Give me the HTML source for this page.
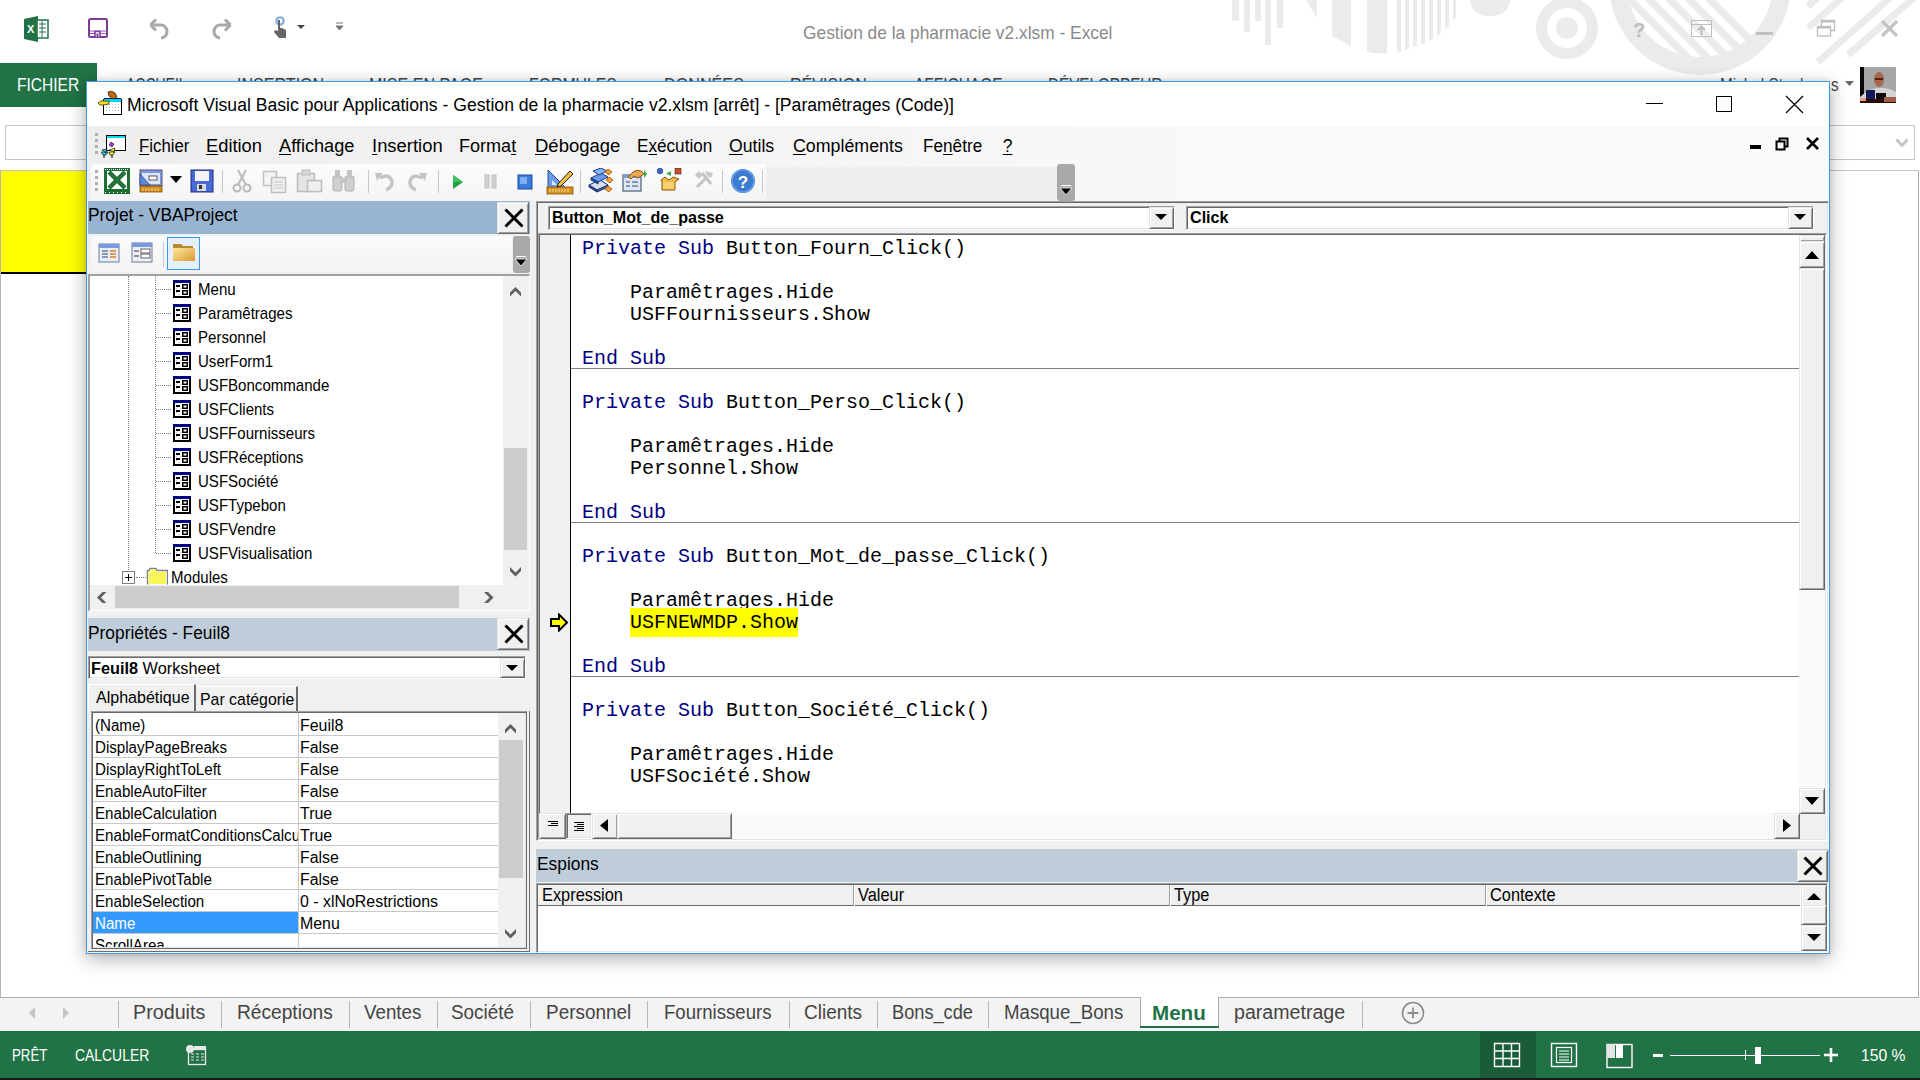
<!DOCTYPE html>
<html><head><meta charset="utf-8">
<style>
*{margin:0;padding:0;box-sizing:border-box}
html,body{width:1920px;height:1080px;overflow:hidden;background:#fff;font-family:"Liberation Sans",sans-serif;position:relative}
.a{position:absolute}
.t{position:absolute;white-space:pre;line-height:1}
u{text-decoration:underline;text-underline-offset:2px;text-decoration-thickness:1px}
</style></head><body>

<svg class="a" style="left:0px;top:0px;" width="1920" height="76" viewBox="0 0 1920 76"><g fill="#ebebeb">
<rect x="1232" y="-2" width="7" height="23"/>
<rect x="1244" y="-2" width="6" height="34"/>
<rect x="1255" y="-2" width="6" height="23"/>
<rect x="1265" y="-2" width="6" height="47"/>
<rect x="1277" y="-2" width="6" height="30"/>
<polygon points="1306,0 1317,0 1317,18"/>
<polygon points="1332,0 1351,0 1351,46 1332,36"/>
<path d="M1367,0 H1387 V53 Q1377,54 1367,52 Z"/>
<path d="M1397,0 H1401 V51 L1397,52 Z M1405,0 H1409 V49 L1405,50 Z M1413,0 H1417 V46 L1413,47 Z M1421,0 H1425 V43 L1421,45 Z M1429,0 H1433 V39 L1429,41 Z M1437,0 H1441 V33 L1437,36 Z M1445,0 H1449 V26 L1445,30 Z M1453,0 H1456 V17 L1453,21 Z"/>
<path d="M1470,0 H1510 Q1508,16 1490,16 Q1472,16 1470,0 Z"/>
<path fill-rule="evenodd" d="M1567,-2 m-31,30 a31,31 0 1,0 62,0 a31,31 0 1,0 -62,0 Z M1547,28 a20,20 0 1,0 40,0 a20,20 0 1,0 -40,0 Z"/>
<circle cx="1567" cy="28" r="11"/>
<path fill-rule="evenodd" d="M1609,-16 a91,91 0 1,0 182,0 a91,91 0 1,0 -182,0 Z M1627,-16 a73,73 0 1,0 146,0 a73,73 0 1,0 -146,0 Z"/>
<g clip-path="url(#cl1)" stroke="#ebebeb" stroke-width="7.5"><path d="M1620,-10 L1700,70 M1636,-14 L1720,70 M1652,-18 L1740,70 M1668,-22 L1760,70 M1684,-26 L1780,70"/></g>
</g>
<g stroke="#ebebeb" stroke-width="7" fill="none"><path d="M1808,6 L1824,-8 M1808,28 L1846,-6 M1818,62 L1892,-4 M1848,55 L1916,-4"/></g>
<defs><clipPath id="cl1"><circle cx="1700" cy="-16" r="74"/></clipPath></defs></svg>
<svg class="a" style="left:24px;top:16px;" width="26" height="26" viewBox="0 0 26 26"><path d="M0,3 L14,0 V26 L0,23 Z" fill="#217346"/>
<rect x="13" y="4" width="11" height="18" fill="#fff" stroke="#217346" stroke-width="1.5"/>
<path d="M15,8h7M15,12h7M15,16h7M18,5v16" stroke="#217346" stroke-width="1"/>
<text x="3" y="17" font-size="11" font-weight="bold" fill="#fff" font-family="Liberation Sans">X</text></svg>
<svg class="a" style="left:88px;top:18px;" width="20" height="20" viewBox="0 0 20 20"><rect x="1" y="1" width="18" height="18" rx="1.5" fill="#fff" stroke="#7d3c98" stroke-width="2"/>
<path d="M2,13 H18 M2,15.5 H7 M12,15.5 H18" stroke="#9a5ab8" stroke-width="1.2"/><path d="M7,19 V13.5 H12 V19" fill="#fff" stroke="#7d3c98" stroke-width="1.6"/><path d="M8.5,19 V15.5 H10.5 V19 Z" fill="#7d3c98"/></svg>
<svg class="a" style="left:148px;top:17px;" width="24" height="23" viewBox="0 0 24 23"><path d="M4,8 H13 A6,6.5 0 0 1 13,21" fill="none" stroke="#a8a8a8" stroke-width="3"/><path d="M2.5,8 L8,2.5 M2.5,8 L8,13.5" stroke="#a8a8a8" stroke-width="3" fill="none"/></svg>
<svg class="a" style="left:209px;top:17px;" width="24" height="23" viewBox="0 0 24 23"><path d="M20,8 H11 A6,6.5 0 0 0 11,21" fill="none" stroke="#a8a8a8" stroke-width="3"/><path d="M21.5,8 L16,2.5 M21.5,8 L16,13.5" stroke="#a8a8a8" stroke-width="3" fill="none"/></svg>
<svg class="a" style="left:271px;top:16px;" width="20" height="24" viewBox="0 0 20 24"><circle cx="9" cy="5" r="3.6" fill="none" stroke="#8ab0e0" stroke-width="2.4"/><path d="M7,4 V15 L4,14 L3,16 L8,22 H15 V14 L11,12 H9 V4 Z" fill="#666"/></svg>
<svg class="a" style="left:296px;top:24px;" width="10" height="6" viewBox="0 0 10 6"><path d="M1,1 H9 L5,5 Z" fill="#444"/></svg>
<svg class="a" style="left:335px;top:22px;" width="10" height="9" viewBox="0 0 10 9"><path d="M1,1 H8 M1,4 H8 L4.5,8 Z" stroke="#777" stroke-width="1" fill="#777"/></svg>
<div class="t" style="left:803px;top:22.85px;font-size:19px;color:#8a8a8a;font-weight:normal;font-family:'Liberation Sans',sans-serif;transform:scaleX(0.913);transform-origin:0 0;">Gestion de la pharmacie v2.xlsm - Excel</div>
<div class="t" style="left:1633px;top:19.50px;font-size:20px;color:#bcbcbc;font-weight:bold;font-family:'Liberation Sans',sans-serif;">?</div>
<svg class="a" style="left:1690px;top:18px;" width="24" height="22" viewBox="0 0 24 22"><rect x="1.5" y="2.5" width="20" height="16" fill="none" stroke="#bdbdbd" stroke-width="1"/><path d="M1.5,6.5 H21.5" stroke="#bdbdbd"/><path d="M11.5,17 V9 M8,12 L11.5,8.5 L15,12" stroke="#bdbdbd" stroke-width="2" fill="none"/></svg>
<div class="a" style="left:1756px;top:32px;width:17px;height:3px;background:#c0c0c0;"></div>
<svg class="a" style="left:1816px;top:18px;" width="22" height="22" viewBox="0 0 22 22"><path d="M5.5,8 V2.5 H18.5 V12.5 H15" fill="none" stroke="#bdbdbd" stroke-width="1.3"/><rect x="5" y="2" width="14" height="2.5" fill="#bdbdbd"/><rect x="1.5" y="8.5" width="13" height="9.5" fill="#fff" stroke="#bdbdbd" stroke-width="1.3"/><rect x="1" y="8" width="14" height="2.5" fill="#bdbdbd"/></svg>
<svg class="a" style="left:1879px;top:18px;" width="22" height="22" viewBox="0 0 22 22"><path d="M3,3 L18,18 M18,3 L3,18" stroke="#c4c4c4" stroke-width="3.2"/></svg>
<div class="a" style="left:0px;top:63px;width:97px;height:44px;background:#217346;"></div>
<div class="t" style="left:17px;top:76.40px;font-size:18px;color:#fff;font-weight:normal;font-family:'Liberation Sans',sans-serif;transform:scaleX(0.863);transform-origin:0 0;">FICHIER</div>
<div class="t" style="left:125.8px;top:76.20px;font-size:18px;color:#444;font-weight:normal;font-family:'Liberation Sans',sans-serif;transform:scaleX(0.776);transform-origin:0 0;">ACCUEIL</div>
<div class="t" style="left:237.3px;top:76.20px;font-size:18px;color:#444;font-weight:normal;font-family:'Liberation Sans',sans-serif;transform:scaleX(0.893);transform-origin:0 0;">INSERTION</div>
<div class="t" style="left:368.6px;top:76.20px;font-size:18px;color:#444;font-weight:normal;font-family:'Liberation Sans',sans-serif;transform:scaleX(0.892);transform-origin:0 0;">MISE EN PAGE</div>
<div class="t" style="left:528.8px;top:76.20px;font-size:18px;color:#444;font-weight:normal;font-family:'Liberation Sans',sans-serif;transform:scaleX(0.879);transform-origin:0 0;">FORMULES</div>
<div class="t" style="left:663.8px;top:76.20px;font-size:18px;color:#444;font-weight:normal;font-family:'Liberation Sans',sans-serif;transform:scaleX(0.898);transform-origin:0 0;">DONNÉES</div>
<div class="t" style="left:789.8px;top:76.20px;font-size:18px;color:#444;font-weight:normal;font-family:'Liberation Sans',sans-serif;transform:scaleX(0.893);transform-origin:0 0;">RÉVISION</div>
<div class="t" style="left:913.8px;top:76.20px;font-size:18px;color:#444;font-weight:normal;font-family:'Liberation Sans',sans-serif;transform:scaleX(0.859);transform-origin:0 0;">AFFICHAGE</div>
<div class="t" style="left:1048.3999999999999px;top:76.20px;font-size:18px;color:#444;font-weight:normal;font-family:'Liberation Sans',sans-serif;transform:scaleX(0.847);transform-origin:0 0;">DÉVELOPPEUR</div>
<div class="t" style="left:1720px;top:75.70px;font-size:18px;color:#444;font-weight:normal;font-family:'Liberation Sans',sans-serif;transform:scaleX(0.85);transform-origin:0 0;">Michel Stoubes</div>
<div class="t" style="left:1831px;top:75.70px;font-size:18px;color:#444;font-weight:normal;font-family:'Liberation Sans',sans-serif;transform:scaleX(0.85);transform-origin:0 0;">s</div>
<svg class="a" style="left:1845px;top:81px;" width="9" height="6" viewBox="0 0 9 6"><path d="M0,0 H9 L4.5,5 Z" fill="#666"/></svg>
<svg class="a" style="left:1860px;top:67px;" width="36" height="36" viewBox="0 0 36 36"><rect width="36" height="36" fill="#a6a6a6"/><rect width="4" height="31" fill="#080808"/>
<ellipse cx="19" cy="12.5" rx="5" ry="7.5" fill="#a8664f"/><rect x="15" y="11" width="8" height="2" fill="#502010"/>
<path d="M0,30 Q8,22 17,21 Q27,20 36,25 V33 H0 Z" fill="#d4d4d4"/>
<rect x="6" y="23" width="9" height="13" fill="#101a58"/><rect x="16" y="26" width="10" height="7" fill="#0a0a0a"/>
<rect x="0" y="32" width="36" height="4" fill="#2a0c0c"/><rect x="24" y="30" width="12" height="5" fill="#a06048"/><rect x="0" y="31" width="6" height="3" fill="#e0a080"/></svg>
<div class="a" style="left:5px;top:125px;width:1910px;height:35px;background:#fff;border:1px solid #c6c6c6"></div>
<svg class="a" style="left:1895px;top:138px;" width="14" height="10" viewBox="0 0 14 10"><path d="M1.5,1.5 L7,7.5 L12.5,1.5" stroke="#c4c4c4" stroke-width="2.8" fill="none"/></svg>
<div class="a" style="left:0px;top:170px;width:1919px;height:828px;background:#fff;border-top:1px solid #c6c6c6;border-left:1px solid #b5b5b5;border-bottom:1px solid #ababab;border-right:1px solid #ababab"></div>
<div class="a" style="left:1px;top:171px;width:85px;height:101px;background:#ffff00;"></div>
<div class="a" style="left:1px;top:272px;width:85px;height:2px;background:#000;"></div>
<div class="a" style="left:0px;top:998px;width:1920px;height:33px;background:#f3f3f3;"></div>
<svg class="a" style="left:26px;top:1005px;" width="12" height="16" viewBox="0 0 12 16"><path d="M9,2 L3,8 L9,14 Z" fill="#c4c4c4"/></svg>
<svg class="a" style="left:60px;top:1005px;" width="12" height="16" viewBox="0 0 12 16"><path d="M3,2 L9,8 L3,14 Z" fill="#c4c4c4"/></svg>
<div class="a" style="left:118px;top:1001px;width:1px;height:27px;background:#b8b8b8;"></div>
<div class="a" style="left:221px;top:1001px;width:1px;height:27px;background:#b8b8b8;"></div>
<div class="a" style="left:349px;top:1001px;width:1px;height:27px;background:#b8b8b8;"></div>
<div class="a" style="left:437px;top:1001px;width:1px;height:27px;background:#b8b8b8;"></div>
<div class="a" style="left:530px;top:1001px;width:1px;height:27px;background:#b8b8b8;"></div>
<div class="a" style="left:647px;top:1001px;width:1px;height:27px;background:#b8b8b8;"></div>
<div class="a" style="left:789px;top:1001px;width:1px;height:27px;background:#b8b8b8;"></div>
<div class="a" style="left:877px;top:1001px;width:1px;height:27px;background:#b8b8b8;"></div>
<div class="a" style="left:988px;top:1001px;width:1px;height:27px;background:#b8b8b8;"></div>
<div class="a" style="left:1362px;top:1001px;width:1px;height:27px;background:#b8b8b8;"></div>
<div class="t" style="left:133.0px;top:1003.34px;font-size:19.6px;color:#444;font-weight:normal;font-family:'Liberation Sans',sans-serif;transform:scaleX(1.006);transform-origin:0 0;">Produits</div>
<div class="t" style="left:237.0px;top:1003.34px;font-size:19.6px;color:#444;font-weight:normal;font-family:'Liberation Sans',sans-serif;transform:scaleX(0.977);transform-origin:0 0;">Réceptions</div>
<div class="t" style="left:363.5px;top:1003.34px;font-size:19.6px;color:#444;font-weight:normal;font-family:'Liberation Sans',sans-serif;transform:scaleX(0.957);transform-origin:0 0;">Ventes</div>
<div class="t" style="left:450.5px;top:1003.34px;font-size:19.6px;color:#444;font-weight:normal;font-family:'Liberation Sans',sans-serif;transform:scaleX(0.962);transform-origin:0 0;">Société</div>
<div class="t" style="left:545.5px;top:1003.34px;font-size:19.6px;color:#444;font-weight:normal;font-family:'Liberation Sans',sans-serif;transform:scaleX(0.967);transform-origin:0 0;">Personnel</div>
<div class="t" style="left:664.2px;top:1003.34px;font-size:19.6px;color:#444;font-weight:normal;font-family:'Liberation Sans',sans-serif;transform:scaleX(0.949);transform-origin:0 0;">Fournisseurs</div>
<div class="t" style="left:803.5px;top:1003.34px;font-size:19.6px;color:#444;font-weight:normal;font-family:'Liberation Sans',sans-serif;transform:scaleX(0.97);transform-origin:0 0;">Clients</div>
<div class="t" style="left:892.1px;top:1003.34px;font-size:19.6px;color:#444;font-weight:normal;font-family:'Liberation Sans',sans-serif;transform:scaleX(0.929);transform-origin:0 0;">Bons_cde</div>
<div class="t" style="left:1004.1px;top:1003.34px;font-size:19.6px;color:#444;font-weight:normal;font-family:'Liberation Sans',sans-serif;transform:scaleX(0.952);transform-origin:0 0;">Masque_Bons</div>
<div class="a" style="left:1140px;top:997px;width:79px;height:31px;background:#fff;border-left:1px solid #ababab;border-right:1px solid #ababab"></div>
<div class="a" style="left:1140px;top:1026px;width:79px;height:2px;background:#217346;"></div>
<div class="t" style="left:1152px;top:1002.50px;font-size:20px;color:#217346;font-weight:bold;font-family:'Liberation Sans',sans-serif;transform:scaleX(1.03);transform-origin:0 0;">Menu</div>
<div class="t" style="left:1234px;top:1003.34px;font-size:19.6px;color:#444;font-weight:normal;font-family:'Liberation Sans',sans-serif;">parametrage</div>
<svg class="a" style="left:1401px;top:1001px;" width="24" height="24" viewBox="0 0 24 24"><circle cx="12" cy="12" r="10.5" fill="none" stroke="#8c8c8c" stroke-width="1.6"/><path d="M12,6.5 V17.5 M6.5,12 H17.5" stroke="#8c8c8c" stroke-width="1.8"/></svg>
<div class="a" style="left:0px;top:1031px;width:1920px;height:47px;background:#217346;"></div>
<div class="a" style="left:0px;top:1078px;width:1920px;height:2px;background:#1a1a1a;"></div>
<div class="t" style="left:12px;top:1046.71px;font-size:17.4px;color:#fff;font-weight:normal;font-family:'Liberation Sans',sans-serif;transform:scaleX(0.765);transform-origin:0 0;">PRÊT</div>
<div class="t" style="left:75px;top:1046.71px;font-size:17.4px;color:#fff;font-weight:normal;font-family:'Liberation Sans',sans-serif;transform:scaleX(0.8);transform-origin:0 0;">CALCULER</div>
<svg class="a" style="left:185px;top:1044px;" width="22" height="22" viewBox="0 0 22 22"><circle cx="5" cy="5" r="4" fill="#e8e8e8"/><rect x="3.5" y="5.5" width="17" height="15" fill="none" stroke="#e8e8e8" stroke-width="1.3"/><rect x="9" y="2" width="12" height="4" fill="#e8e8e8"/><path d="M6,10h3M11,10h3M16,10h3M6,13h3M11,13h3M16,13h3M6,16h3M11,16h3M16,16h3" stroke="#e8e8e8" stroke-width="1.2"/></svg>
<div class="a" style="left:1480px;top:1032px;width:56px;height:46px;background:#1a5c38;"></div>
<svg class="a" style="left:1493px;top:1042px;" width="28" height="26" viewBox="0 0 28 26"><path d="M1.5,1.5 H26.5 V24.5 H1.5 Z M1.5,9 H26.5 M1.5,16.5 H26.5 M10,1.5 V24.5 M18.5,1.5 V24.5" fill="none" stroke="#fff" stroke-width="1.4"/></svg>
<svg class="a" style="left:1550px;top:1042px;" width="28" height="26" viewBox="0 0 28 26"><rect x="1.5" y="1.5" width="25" height="23" fill="none" stroke="#fff" stroke-width="1.4"/><rect x="6.5" y="5.5" width="15" height="15" fill="none" stroke="#fff" stroke-width="1.2"/><path d="M9,9h10M9,12h10M9,15h10M9,18h10" stroke="#fff" stroke-width="1"/></svg>
<svg class="a" style="left:1606px;top:1043px;" width="27" height="26" viewBox="0 0 27 26"><rect x="1" y="1.5" width="25" height="23" fill="none" stroke="#fff" stroke-width="1.4"/><rect x="1" y="1" width="8" height="14" fill="#e4e4e4"/><rect x="10" y="1" width="7" height="14" fill="#fff"/></svg>
<div class="a" style="left:1653px;top:1054px;width:10px;height:3px;background:#fff;"></div>
<div class="a" style="left:1670px;top:1055px;width:150px;height:1px;background:#fff;"></div>
<div class="a" style="left:1745px;top:1050px;width:1px;height:10px;background:#fff;"></div>
<div class="a" style="left:1755px;top:1047px;width:6px;height:17px;background:#fff;"></div>
<svg class="a" style="left:1823px;top:1047px;" width="16" height="16" viewBox="0 0 16 16"><path d="M8,1 V15 M1,8 H15" stroke="#fff" stroke-width="2.6"/></svg>
<div class="t" style="left:1861px;top:1047.21px;font-size:17.4px;color:#fff;font-weight:normal;font-family:'Liberation Sans',sans-serif;transform:scaleX(0.9);transform-origin:0 0;">150 %</div>
<div class="a" style="left:86px;top:81px;width:1744px;height:873px;background:#f0f0f0;border:1px solid #3d9be9;box-shadow:0 5px 18px rgba(0,0,0,.30),0 0 6px rgba(0,0,0,.10)"></div>
<div class="a" style="left:87px;top:82px;width:1742px;height:44px;background:#fff;"></div>
<svg class="a" style="left:97px;top:90px;" width="27" height="26" viewBox="0 0 27 26"><rect x="6.5" y="9.5" width="18" height="15" fill="#fff" stroke="#000"/>
<rect x="7" y="9" width="17" height="3" fill="#00d8f8"/><path d="M7,8.5 H24" stroke="#000060"/>
<g fill="#b0b0b0"><rect x="9" y="14" width="1" height="1"/><rect x="12" y="14" width="1" height="1"/><rect x="15" y="14" width="1" height="1"/><rect x="18" y="14" width="1" height="1"/><rect x="21" y="14" width="1" height="1"/>
<rect x="9" y="17" width="1" height="1"/><rect x="12" y="17" width="1" height="1"/><rect x="15" y="17" width="1" height="1"/><rect x="18" y="17" width="1" height="1"/><rect x="21" y="17" width="1" height="1"/>
<rect x="9" y="20" width="1" height="1"/><rect x="12" y="20" width="1" height="1"/><rect x="15" y="20" width="1" height="1"/><rect x="18" y="20" width="1" height="1"/><rect x="21" y="20" width="1" height="1"/></g>
<path d="M11,2 Q15,0 18,3 L20,7 L16,9 L12,6 Z" fill="#b86a18" stroke="#402000" stroke-width=".8"/>
<path d="M1,13 Q3,10 8,11 L12,11 L12,14 L6,15 Q2,16 1,13 Z" fill="#f0e020" stroke="#403000" stroke-width=".8"/></svg>
<div class="t" style="left:127px;top:96.84px;font-size:17.6px;color:#000;font-weight:normal;font-family:'Liberation Sans',sans-serif;">Microsoft Visual Basic pour Applications - Gestion de la pharmacie v2.xlsm [arrêt] - [Paramêtrages (Code)]</div>
<div class="a" style="left:1646px;top:103px;width:17px;height:1px;background:#000;"></div>
<div class="a" style="left:1716px;top:96px;width:16px;height:16px;background:transparent;border:1px solid #000"></div>
<svg class="a" style="left:1785px;top:95px;" width="19" height="19" viewBox="0 0 19 19"><path d="M1,1 L18,18 M18,1 L1,18" stroke="#000" stroke-width="1.2"/></svg>
<div class="a" style="left:87px;top:126px;width:1742px;height:76px;background:linear-gradient(to right,#eeeeee 0%,#f3f3f3 30%,#f8f8f8 60%,#fafafa 100%);"></div>
<div class="a" style="left:91px;top:164px;width:675px;height:37px;background:linear-gradient(to bottom,#fcfcfc,#f4f4f4);border-radius:4px 0 0 4px"></div>
<div class="a" style="left:95px;top:133px;width:3px;height:3px;background:#b0b0b0;"></div>
<div class="a" style="left:95px;top:139px;width:3px;height:3px;background:#b0b0b0;"></div>
<div class="a" style="left:95px;top:145px;width:3px;height:3px;background:#b0b0b0;"></div>
<div class="a" style="left:95px;top:151px;width:3px;height:3px;background:#b0b0b0;"></div>
<div class="a" style="left:95px;top:170px;width:3px;height:3px;background:#b0b0b0;"></div>
<div class="a" style="left:95px;top:176px;width:3px;height:3px;background:#b0b0b0;"></div>
<div class="a" style="left:95px;top:182px;width:3px;height:3px;background:#b0b0b0;"></div>
<div class="a" style="left:95px;top:188px;width:3px;height:3px;background:#b0b0b0;"></div>
<svg class="a" style="left:101px;top:133px;" width="26" height="26" viewBox="0 0 26 26"><rect x="5.5" y="2.5" width="19" height="15" fill="#fff" stroke="#000"/><rect x="6" y="3" width="18" height="2" fill="#00d8f8"/>
<path d="M10,9 L13,11 L11,14 L8,12 Z" fill="#a040c0" stroke="#300040" stroke-width=".6"/>
<path d="M1,17 L6,16 L5,20 Z M0,19 H7 L5,22 H2 Z" fill="#30c8e8" stroke="#000" stroke-width=".6"/>
<path d="M8,17 L14,15 L13,19 Z M8,19 H14 L12,22 H9 Z" fill="#f0f040" stroke="#000" stroke-width=".6"/>
<path d="M3,22 V25 M11,22 V25" stroke="#000" stroke-width="1"/></svg>
<div class="t" style="left:138.6px;top:138.12px;font-size:17.5px;color:#000;font-weight:normal;font-family:'Liberation Sans',sans-serif;transform:scaleX(0.959);transform-origin:0 0;"><u>F</u>ichier</div>
<div class="t" style="left:206.29999999999998px;top:138.12px;font-size:17.5px;color:#000;font-weight:normal;font-family:'Liberation Sans',sans-serif;transform:scaleX(1.046);transform-origin:0 0;"><u>E</u>dition</div>
<div class="t" style="left:279.2px;top:138.12px;font-size:17.5px;color:#000;font-weight:normal;font-family:'Liberation Sans',sans-serif;transform:scaleX(1.038);transform-origin:0 0;"><u>A</u>ffichage</div>
<div class="t" style="left:371.9px;top:138.12px;font-size:17.5px;color:#000;font-weight:normal;font-family:'Liberation Sans',sans-serif;transform:scaleX(1.052);transform-origin:0 0;"><u>I</u>nsertion</div>
<div class="t" style="left:459.4px;top:138.12px;font-size:17.5px;color:#000;font-weight:normal;font-family:'Liberation Sans',sans-serif;transform:scaleX(1.031);transform-origin:0 0;">Forma<u>t</u></div>
<div class="t" style="left:534.5px;top:138.12px;font-size:17.5px;color:#000;font-weight:normal;font-family:'Liberation Sans',sans-serif;transform:scaleX(1.057);transform-origin:0 0;"><u>D</u>ébogage</div>
<div class="t" style="left:637.0px;top:138.12px;font-size:17.5px;color:#000;font-weight:normal;font-family:'Liberation Sans',sans-serif;transform:scaleX(0.979);transform-origin:0 0;">E<u>x</u>écution</div>
<div class="t" style="left:729.2px;top:138.12px;font-size:17.5px;color:#000;font-weight:normal;font-family:'Liberation Sans',sans-serif;transform:scaleX(1.009);transform-origin:0 0;"><u>O</u>utils</div>
<div class="t" style="left:793.4000000000001px;top:138.12px;font-size:17.5px;color:#000;font-weight:normal;font-family:'Liberation Sans',sans-serif;transform:scaleX(1.017);transform-origin:0 0;"><u>C</u>ompléments</div>
<div class="t" style="left:922.5px;top:138.12px;font-size:17.5px;color:#000;font-weight:normal;font-family:'Liberation Sans',sans-serif;transform:scaleX(0.981);transform-origin:0 0;">Fe<u>n</u>être</div>
<div class="t" style="left:1002.7px;top:138.12px;font-size:17.5px;color:#000;font-weight:normal;font-family:'Liberation Sans',sans-serif;"><u>?</u></div>
<div class="a" style="left:1750px;top:145px;width:11px;height:4px;background:#000;"></div>
<svg class="a" style="left:1775px;top:136px;" width="15" height="15" viewBox="0 0 15 15"><rect x="1.5" y="5.5" width="8" height="8" fill="none" stroke="#000" stroke-width="2"/><path d="M4.5,5 V2.5 H12.5 V10.5 H10" fill="none" stroke="#000" stroke-width="2"/></svg>
<svg class="a" style="left:1805px;top:136px;" width="15" height="15" viewBox="0 0 15 15"><path d="M2,2 L13,13 M13,2 L2,13" stroke="#000" stroke-width="2.6"/></svg>
<div class="a" style="left:766px;top:167px;width:291px;height:34px;background:#efefef;"></div>
<div class="a" style="left:1057px;top:164px;width:18px;height:37px;background:#a9a9a9;border-radius:3px"></div>
<svg class="a" style="left:1058px;top:184px;" width="16" height="14" viewBox="0 0 16 14"><path d="M3,1.5 H13" stroke="#fff" stroke-width="1"/><path d="M2,4 H14 L8,11 Z" fill="#000" stroke="#fff" stroke-width=".8"/></svg>
<svg class="a" style="left:104px;top:168px;" width="26" height="26" viewBox="0 0 26 26"><rect x="0" y="0" width="26" height="26" fill="#1e6e34"/>
<g fill="#fff"><rect x="1" y="1" width="1" height="1"/><rect x="3" y="1" width="1" height="1"/><rect x="5" y="1" width="1" height="1"/><rect x="7" y="1" width="1" height="1"/><rect x="9" y="1" width="1" height="1"/><rect x="11" y="1" width="1" height="1"/><rect x="13" y="1" width="1" height="1"/><rect x="15" y="1" width="1" height="1"/><rect x="17" y="1" width="1" height="1"/><rect x="19" y="1" width="1" height="1"/><rect x="21" y="1" width="1" height="1"/><rect x="23" y="1" width="1" height="1"/>
<rect x="1" y="24" width="1" height="1"/><rect x="5" y="24" width="1" height="1"/><rect x="9" y="24" width="1" height="1"/><rect x="13" y="24" width="1" height="1"/><rect x="17" y="24" width="1" height="1"/><rect x="21" y="24" width="1" height="1"/></g>
<rect x="3" y="3" width="20" height="18" fill="#fff"/>
<path d="M5,4 L21,20 M21,4 L5,20" stroke="#1e6e34" stroke-width="4.5"/><path d="M5,4 L21,20 M21,4 L5,20" stroke="#3a9a50" stroke-width="1" stroke-dasharray="1 1"/></svg>
<svg class="a" style="left:138px;top:168px;" width="26" height="26" viewBox="0 0 26 26"><rect x="2" y="2" width="22" height="16" fill="#7a9ae0" stroke="#6a4a70"/><rect x="4" y="5" width="18" height="11" fill="#dde6f8"/>
<rect x="11" y="8" width="8" height="4" fill="#fff" stroke="#555"/><path d="M2,6 L12,17 L2,17 Z" fill="#5a8ad8" stroke="#2a4a98" stroke-width=".8"/>
<rect x="2" y="18" width="22" height="6" fill="#d08a20" stroke="#8a5000" stroke-width=".8"/><path d="M5,20v3M8,20v3M11,20v3M14,20v3M17,20v3M20,20v3" stroke="#fff2c0" stroke-width=".8"/></svg>
<svg class="a" style="left:170px;top:175px;" width="13" height="9" viewBox="0 0 13 9"><path d="M0,1 H12 L6,8 Z" fill="#000"/></svg>
<svg class="a" style="left:190px;top:168px;" width="24" height="26" viewBox="0 0 24 26"><rect x="1" y="2" width="22" height="22" fill="#4a6ad8" stroke="#1a2a78"/><rect x="5" y="3" width="14" height="10" fill="#f4f4f8"/><rect x="7" y="16" width="9" height="7" fill="#d8d8e0"/><rect x="9" y="17" width="3" height="4" fill="#333"/></svg>
<div class="a" style="left:222px;top:170px;width:1px;height:23px;background:#c8c8c8;"></div>
<svg class="a" style="left:232px;top:168px;" width="20" height="26" viewBox="0 0 20 26"><circle cx="5" cy="20" r="3.5" fill="none" stroke="#b8b8b8" stroke-width="2"/><circle cx="15" cy="20" r="3.5" fill="none" stroke="#b8b8b8" stroke-width="2"/><path d="M6,17 L14,2 M14,17 L6,2" stroke="#c0c0c0" stroke-width="2.4"/></svg>
<svg class="a" style="left:262px;top:170px;" width="26" height="24" viewBox="0 0 26 24"><rect x="1.5" y="1.5" width="13" height="14" fill="#f4f4f4" stroke="#c0c0c0" stroke-width="1.5"/><rect x="9.5" y="7.5" width="14" height="15" fill="#eeeeee" stroke="#c0c0c0" stroke-width="1.5"/><path d="M12,12h9M12,15h9M12,18h9" stroke="#c8c8c8"/></svg>
<svg class="a" style="left:296px;top:168px;" width="28" height="26" viewBox="0 0 28 26"><rect x="1.5" y="5.5" width="17" height="18" fill="#e4e4e4" stroke="#bcbcbc" stroke-width="1.5"/><rect x="6" y="2" width="8" height="5" fill="#d8d8d8" stroke="#bcbcbc"/><rect x="11.5" y="12.5" width="14" height="11" fill="#eeeeee" stroke="#bcbcbc" stroke-width="1.5"/></svg>
<svg class="a" style="left:331px;top:168px;" width="26" height="26" viewBox="0 0 26 26"><rect x="2" y="8" width="9" height="15" rx="2" fill="#d0d0d0" stroke="#b0b0b0"/><rect x="14" y="8" width="9" height="15" rx="2" fill="#d0d0d0" stroke="#b0b0b0"/><rect x="4" y="2" width="5" height="8" fill="#c4c4c4"/><rect x="16" y="2" width="5" height="8" fill="#c4c4c4"/><rect x="9" y="10" width="7" height="5" fill="#c4c4c4"/></svg>
<div class="a" style="left:368px;top:170px;width:1px;height:23px;background:#c8c8c8;"></div>
<svg class="a" style="left:373px;top:170px;" width="24" height="22" viewBox="0 0 24 22"><path d="M7,8 Q16,3 19,11 Q20,17 13,20" fill="none" stroke="#c4c4c4" stroke-width="3.4"/><path d="M2,3 L10,3 L4,11 Z" fill="#c4c4c4"/></svg>
<svg class="a" style="left:405px;top:170px;" width="24" height="22" viewBox="0 0 24 22"><path d="M17,8 Q8,3 5,11 Q4,17 11,20" fill="none" stroke="#c4c4c4" stroke-width="3.4"/><path d="M22,3 L14,3 L20,11 Z" fill="#c4c4c4"/></svg>
<div class="a" style="left:438px;top:170px;width:1px;height:23px;background:#c8c8c8;"></div>
<svg class="a" style="left:452px;top:174px;" width="12" height="16" viewBox="0 0 12 16"><path d="M1,1 L11,8 L1,15 Z" fill="#20a040"/><path d="M1,1 L11,8 L1,8 Z" fill="#40c060"/></svg>
<svg class="a" style="left:484px;top:174px;" width="14" height="15" viewBox="0 0 14 15"><rect x="1" y="1" width="4" height="13" fill="#d0d0d0" stroke="#c0c0c0"/><rect x="8" y="1" width="4" height="13" fill="#d0d0d0" stroke="#c0c0c0"/></svg>
<svg class="a" style="left:517px;top:174px;" width="17" height="16" viewBox="0 0 17 16"><rect x="1" y="1" width="14" height="14" fill="#3a7ad8" stroke="#1a4aa8"/><rect x="3" y="3" width="7" height="7" fill="#7ab0f0"/></svg>
<svg class="a" style="left:546px;top:167px;" width="28" height="28" viewBox="0 0 28 28"><path d="M2,3 L2,22 L21,22 Z" fill="#6a9ae8" stroke="#2a4a98" stroke-width="1"/><path d="M6,13 L6,18 L11,18 Z" fill="#dde6f8"/>
<rect x="1" y="20" width="26" height="7" fill="#d89020" stroke="#8a5000" stroke-width=".8"/><path d="M4,22v3M7,22v3M10,22v3M13,22v3M16,22v3M19,22v3M22,22v3" stroke="#fff2c0" stroke-width=".8"/>
<path d="M12,17 L24,4 L27,7 L15,19 L11,20 Z" fill="#f0c040" stroke="#202020" stroke-width="1"/></svg>
<div class="a" style="left:580px;top:170px;width:1px;height:23px;background:#c8c8c8;"></div>
<svg class="a" style="left:588px;top:168px;" width="26" height="26" viewBox="0 0 26 26"><g stroke="#1a3a80" stroke-width="1">
<path d="M1,17 L12,12 L20,17 L9,22 Z" fill="#d8e0f0"/><path d="M1,17 V19 L9,24 V22 Z" fill="#404860"/><path d="M9,22 V24 L20,19 V17 Z" fill="#606880"/>
<path d="M3,10 L13,5 L20,9 L10,14 Z" fill="#6a9ae8"/><path d="M3,10 V12 L10,16 V14 Z" fill="#2a4a98"/>
<path d="M5,3 L13,0 L19,3 L11,7 Z" fill="#8ab4f0"/></g>
<path d="M20,1 L24,4 L21,7 L17,4 Z M21,9 L25,12 L22,15 L18,12 Z M20,18 L24,21 L21,24 L17,21 Z" fill="#f0a030" stroke="#a05010" stroke-width=".8"/></svg>
<svg class="a" style="left:622px;top:169px;" width="26" height="24" viewBox="0 0 26 24"><rect x="1" y="6" width="18" height="16" fill="#dce8f8" stroke="#505a70" stroke-width="1.2"/><rect x="1" y="6" width="18" height="3" fill="#7aa0d8"/>
<path d="M4,13 h4 M10,13 h6 M4,17 h4 M10,17 h6" stroke="#707a90" stroke-width="1.4"/>
<path d="M6,8 L11,3 Q15,0 19,2 L22,5 L16,9 L12,7 L9,10 Z" fill="#e8a850" stroke="#7a4a10" stroke-width=".9"/>
<path d="M22,1 L25,5 L22,9 Z" fill="#30b040"/></svg>
<svg class="a" style="left:657px;top:168px;" width="25" height="24" viewBox="0 0 25 24"><circle cx="3" cy="3" r="2.8" fill="#3a6ad0" stroke="#102060" stroke-width=".6"/><path d="M14,3 L9,5.5 L14,8 Z" fill="#40b050"/><rect x="18" y="0" width="6" height="6" fill="#c05030" stroke="#502010" stroke-width=".6"/>
<path d="M4,12 L8,9 L12,12 L16,9 L22,11 L18,14 V22 H5 V14 Z" fill="#f0b848" stroke="#8a5a10" stroke-width="1"/><rect x="6" y="14" width="11" height="7" fill="#f8d070"/></svg>
<svg class="a" style="left:694px;top:170px;" width="20" height="20" viewBox="0 0 20 20"><path d="M3,17 L13,7" stroke="#c4c4c4" stroke-width="3"/><path d="M8,3 L17,14" stroke="#c4c4c4" stroke-width="3"/><path d="M11,1 L19,3 L17,8 L13,6 Z" fill="#c8c8c8"/><path d="M1,5 L5,1 L9,5 L5,9 Z" fill="#c8c8c8"/></svg>
<div class="a" style="left:722px;top:170px;width:1px;height:23px;background:#c8c8c8;"></div>
<svg class="a" style="left:730px;top:168px;" width="26" height="26" viewBox="0 0 26 26"><circle cx="13" cy="13" r="12" fill="#3d7bd0"/><circle cx="13" cy="13" r="11" fill="none" stroke="#6ea6ea" stroke-width="1.2"/><text x="13" y="19.5" font-size="17" font-weight="bold" fill="#fff" text-anchor="middle" font-family="Liberation Sans">?</text></svg>
<div class="a" style="left:762px;top:170px;width:1px;height:23px;background:#c8c8c8;"></div>
<div class="a" style="left:88px;top:201px;width:442px;height:33px;background:#99b4d1;"></div>
<div class="t" style="left:88px;top:206.20px;font-size:18px;color:#000;font-weight:normal;font-family:'Liberation Sans',sans-serif;transform:scaleX(0.965);transform-origin:0 0;">Projet - VBAProject</div>
<div class="a" style="left:497px;top:202px;width:32px;height:32px;background:#f0f0f0;border-top:1px solid #e3e3e3;border-left:1px solid #e3e3e3;border-right:1px solid #696969;border-bottom:1px solid #696969;box-shadow:inset 1px 1px 0 #fff, inset -1px -1px 0 #a0a0a0;"></div>
<svg class="a" style="left:503px;top:207px;" width="22" height="22" viewBox="0 0 22 22"><path d="M2.5,2.5 L19.5,19.5 M19.5,2.5 L2.5,19.5" stroke="#000" stroke-width="3"/></svg>
<div class="a" style="left:88px;top:234px;width:442px;height:40px;background:#f0f0f0;"></div>
<div class="a" style="left:91px;top:236px;width:421px;height:36px;background:linear-gradient(to bottom,#fbfbfb,#f3f3f3);border-radius:4px 0 0 4px"></div>
<svg class="a" style="left:98px;top:243px;" width="22" height="20" viewBox="0 0 22 20"><rect x="1" y="1" width="20" height="18" fill="#e8eef8" stroke="#6a7a98"/><rect x="1" y="1" width="20" height="4" fill="#7a9ae0"/><path d="M4,8h6M4,11h6M4,14h6" stroke="#6a7a98" stroke-width="1.4"/><path d="M12,8h6M12,11h6M12,14h6" stroke="#e08020" stroke-width="1.4"/></svg>
<svg class="a" style="left:131px;top:242px;" width="23" height="21" viewBox="0 0 23 21"><rect x="1" y="1" width="20" height="19" fill="#eef2f8" stroke="#6a7a98"/><rect x="1" y="1" width="20" height="4" fill="#7a9ae0"/><path d="M3,9h5M3,14h5" stroke="#707070" stroke-width="1.4"/><rect x="10" y="7" width="9" height="4" fill="#fff" stroke="#606060"/><rect x="10" y="12" width="9" height="4" fill="#fff" stroke="#606060"/></svg>
<div class="a" style="left:163px;top:242px;width:1px;height:25px;background:#c8c8c8;"></div>
<div class="a" style="left:167px;top:237px;width:33px;height:33px;background:#e6f0fa;border:1px solid #3399ff"></div>
<svg class="a" style="left:171px;top:241px;" width="26" height="22" viewBox="0 0 26 22"><path d="M2,3 H10 L12,5 H22 V19 H2 Z" fill="#b88a30"/><path d="M2,7 H24 V20 H2 Z" fill="url(#fg)"/><defs><linearGradient id="fg" x1="0" y1="0" x2="1" y2="1"><stop offset="0" stop-color="#fde7a0"/><stop offset="1" stop-color="#d89a30"/></linearGradient></defs></svg>
<div class="a" style="left:513px;top:236px;width:17px;height:37px;background:#a9a9a9;border-radius:3px"></div>
<svg class="a" style="left:513px;top:255px;" width="16" height="14" viewBox="0 0 16 14"><path d="M3,1.5 H13" stroke="#fff" stroke-width="1"/><path d="M2,4 H14 L8,11 Z" fill="#000" stroke="#fff" stroke-width=".8"/></svg>
<div class="a" style="left:88px;top:274px;width:442px;height:337px;background:#f0f0f0;border-top:2px solid #a0a0a0;border-left:2px solid #a0a0a0;border-bottom:1px solid #fff;border-right:1px solid #fff"></div>
<div class="a" style="left:90px;top:276px;width:413px;height:309px;background:#fff;"></div>
<div class="a" style="left:128px;top:276px;width:1px;height:302px;border-left:1px dotted #808080"></div>
<div class="a" style="left:155px;top:276px;width:1px;height:277px;border-left:1px dotted #808080"></div>
<div class="a" style="left:156px;top:289px;width:15px;height:1px;border-top:1px dotted #808080"></div>
<svg class="a" style="left:173px;top:280px;" width="18" height="18" viewBox="0 0 18 18"><rect x="0" y="0" width="18" height="18" fill="#000"/><rect x="0" y="0" width="18" height="3" fill="#000080"/>
<rect x="2" y="3" width="14" height="13" fill="#fff"/>
<g fill="#c8c8c8"><rect x="3" y="4" width="1" height="1"/><rect x="5" y="6" width="1" height="1"/><rect x="3" y="8" width="1" height="1"/><rect x="5" y="10" width="1" height="1"/><rect x="3" y="12" width="1" height="1"/><rect x="5" y="14" width="1" height="1"/><rect x="7" y="4" width="1" height="1"/><rect x="7" y="8" width="1" height="1"/><rect x="7" y="12" width="1" height="1"/></g>
<rect x="3" y="5" width="4" height="2" fill="#000"/><rect x="3" y="10" width="4" height="2" fill="#000"/>
<rect x="9" y="4" width="6" height="5" fill="#000"/><rect x="10.5" y="5.5" width="3" height="2" fill="#fff"/>
<rect x="9" y="10" width="6" height="5" fill="#000"/><rect x="10.5" y="11.5" width="3" height="2" fill="#fff"/></svg>
<div class="t" style="left:198px;top:280.55px;font-size:17px;color:#000;font-weight:normal;font-family:'Liberation Sans',sans-serif;transform:scaleX(0.885);transform-origin:0 0;">Menu</div>
<div class="a" style="left:156px;top:313px;width:15px;height:1px;border-top:1px dotted #808080"></div>
<svg class="a" style="left:173px;top:304px;" width="18" height="18" viewBox="0 0 18 18"><rect x="0" y="0" width="18" height="18" fill="#000"/><rect x="0" y="0" width="18" height="3" fill="#000080"/>
<rect x="2" y="3" width="14" height="13" fill="#fff"/>
<g fill="#c8c8c8"><rect x="3" y="4" width="1" height="1"/><rect x="5" y="6" width="1" height="1"/><rect x="3" y="8" width="1" height="1"/><rect x="5" y="10" width="1" height="1"/><rect x="3" y="12" width="1" height="1"/><rect x="5" y="14" width="1" height="1"/><rect x="7" y="4" width="1" height="1"/><rect x="7" y="8" width="1" height="1"/><rect x="7" y="12" width="1" height="1"/></g>
<rect x="3" y="5" width="4" height="2" fill="#000"/><rect x="3" y="10" width="4" height="2" fill="#000"/>
<rect x="9" y="4" width="6" height="5" fill="#000"/><rect x="10.5" y="5.5" width="3" height="2" fill="#fff"/>
<rect x="9" y="10" width="6" height="5" fill="#000"/><rect x="10.5" y="11.5" width="3" height="2" fill="#fff"/></svg>
<div class="t" style="left:198px;top:304.55px;font-size:17px;color:#000;font-weight:normal;font-family:'Liberation Sans',sans-serif;transform:scaleX(0.885);transform-origin:0 0;">Paramêtrages</div>
<div class="a" style="left:156px;top:337px;width:15px;height:1px;border-top:1px dotted #808080"></div>
<svg class="a" style="left:173px;top:328px;" width="18" height="18" viewBox="0 0 18 18"><rect x="0" y="0" width="18" height="18" fill="#000"/><rect x="0" y="0" width="18" height="3" fill="#000080"/>
<rect x="2" y="3" width="14" height="13" fill="#fff"/>
<g fill="#c8c8c8"><rect x="3" y="4" width="1" height="1"/><rect x="5" y="6" width="1" height="1"/><rect x="3" y="8" width="1" height="1"/><rect x="5" y="10" width="1" height="1"/><rect x="3" y="12" width="1" height="1"/><rect x="5" y="14" width="1" height="1"/><rect x="7" y="4" width="1" height="1"/><rect x="7" y="8" width="1" height="1"/><rect x="7" y="12" width="1" height="1"/></g>
<rect x="3" y="5" width="4" height="2" fill="#000"/><rect x="3" y="10" width="4" height="2" fill="#000"/>
<rect x="9" y="4" width="6" height="5" fill="#000"/><rect x="10.5" y="5.5" width="3" height="2" fill="#fff"/>
<rect x="9" y="10" width="6" height="5" fill="#000"/><rect x="10.5" y="11.5" width="3" height="2" fill="#fff"/></svg>
<div class="t" style="left:198px;top:328.55px;font-size:17px;color:#000;font-weight:normal;font-family:'Liberation Sans',sans-serif;transform:scaleX(0.885);transform-origin:0 0;">Personnel</div>
<div class="a" style="left:156px;top:361px;width:15px;height:1px;border-top:1px dotted #808080"></div>
<svg class="a" style="left:173px;top:352px;" width="18" height="18" viewBox="0 0 18 18"><rect x="0" y="0" width="18" height="18" fill="#000"/><rect x="0" y="0" width="18" height="3" fill="#000080"/>
<rect x="2" y="3" width="14" height="13" fill="#fff"/>
<g fill="#c8c8c8"><rect x="3" y="4" width="1" height="1"/><rect x="5" y="6" width="1" height="1"/><rect x="3" y="8" width="1" height="1"/><rect x="5" y="10" width="1" height="1"/><rect x="3" y="12" width="1" height="1"/><rect x="5" y="14" width="1" height="1"/><rect x="7" y="4" width="1" height="1"/><rect x="7" y="8" width="1" height="1"/><rect x="7" y="12" width="1" height="1"/></g>
<rect x="3" y="5" width="4" height="2" fill="#000"/><rect x="3" y="10" width="4" height="2" fill="#000"/>
<rect x="9" y="4" width="6" height="5" fill="#000"/><rect x="10.5" y="5.5" width="3" height="2" fill="#fff"/>
<rect x="9" y="10" width="6" height="5" fill="#000"/><rect x="10.5" y="11.5" width="3" height="2" fill="#fff"/></svg>
<div class="t" style="left:198px;top:352.55px;font-size:17px;color:#000;font-weight:normal;font-family:'Liberation Sans',sans-serif;transform:scaleX(0.885);transform-origin:0 0;">UserForm1</div>
<div class="a" style="left:156px;top:385px;width:15px;height:1px;border-top:1px dotted #808080"></div>
<svg class="a" style="left:173px;top:376px;" width="18" height="18" viewBox="0 0 18 18"><rect x="0" y="0" width="18" height="18" fill="#000"/><rect x="0" y="0" width="18" height="3" fill="#000080"/>
<rect x="2" y="3" width="14" height="13" fill="#fff"/>
<g fill="#c8c8c8"><rect x="3" y="4" width="1" height="1"/><rect x="5" y="6" width="1" height="1"/><rect x="3" y="8" width="1" height="1"/><rect x="5" y="10" width="1" height="1"/><rect x="3" y="12" width="1" height="1"/><rect x="5" y="14" width="1" height="1"/><rect x="7" y="4" width="1" height="1"/><rect x="7" y="8" width="1" height="1"/><rect x="7" y="12" width="1" height="1"/></g>
<rect x="3" y="5" width="4" height="2" fill="#000"/><rect x="3" y="10" width="4" height="2" fill="#000"/>
<rect x="9" y="4" width="6" height="5" fill="#000"/><rect x="10.5" y="5.5" width="3" height="2" fill="#fff"/>
<rect x="9" y="10" width="6" height="5" fill="#000"/><rect x="10.5" y="11.5" width="3" height="2" fill="#fff"/></svg>
<div class="t" style="left:198px;top:376.55px;font-size:17px;color:#000;font-weight:normal;font-family:'Liberation Sans',sans-serif;transform:scaleX(0.885);transform-origin:0 0;">USFBoncommande</div>
<div class="a" style="left:156px;top:409px;width:15px;height:1px;border-top:1px dotted #808080"></div>
<svg class="a" style="left:173px;top:400px;" width="18" height="18" viewBox="0 0 18 18"><rect x="0" y="0" width="18" height="18" fill="#000"/><rect x="0" y="0" width="18" height="3" fill="#000080"/>
<rect x="2" y="3" width="14" height="13" fill="#fff"/>
<g fill="#c8c8c8"><rect x="3" y="4" width="1" height="1"/><rect x="5" y="6" width="1" height="1"/><rect x="3" y="8" width="1" height="1"/><rect x="5" y="10" width="1" height="1"/><rect x="3" y="12" width="1" height="1"/><rect x="5" y="14" width="1" height="1"/><rect x="7" y="4" width="1" height="1"/><rect x="7" y="8" width="1" height="1"/><rect x="7" y="12" width="1" height="1"/></g>
<rect x="3" y="5" width="4" height="2" fill="#000"/><rect x="3" y="10" width="4" height="2" fill="#000"/>
<rect x="9" y="4" width="6" height="5" fill="#000"/><rect x="10.5" y="5.5" width="3" height="2" fill="#fff"/>
<rect x="9" y="10" width="6" height="5" fill="#000"/><rect x="10.5" y="11.5" width="3" height="2" fill="#fff"/></svg>
<div class="t" style="left:198px;top:400.55px;font-size:17px;color:#000;font-weight:normal;font-family:'Liberation Sans',sans-serif;transform:scaleX(0.885);transform-origin:0 0;">USFClients</div>
<div class="a" style="left:156px;top:433px;width:15px;height:1px;border-top:1px dotted #808080"></div>
<svg class="a" style="left:173px;top:424px;" width="18" height="18" viewBox="0 0 18 18"><rect x="0" y="0" width="18" height="18" fill="#000"/><rect x="0" y="0" width="18" height="3" fill="#000080"/>
<rect x="2" y="3" width="14" height="13" fill="#fff"/>
<g fill="#c8c8c8"><rect x="3" y="4" width="1" height="1"/><rect x="5" y="6" width="1" height="1"/><rect x="3" y="8" width="1" height="1"/><rect x="5" y="10" width="1" height="1"/><rect x="3" y="12" width="1" height="1"/><rect x="5" y="14" width="1" height="1"/><rect x="7" y="4" width="1" height="1"/><rect x="7" y="8" width="1" height="1"/><rect x="7" y="12" width="1" height="1"/></g>
<rect x="3" y="5" width="4" height="2" fill="#000"/><rect x="3" y="10" width="4" height="2" fill="#000"/>
<rect x="9" y="4" width="6" height="5" fill="#000"/><rect x="10.5" y="5.5" width="3" height="2" fill="#fff"/>
<rect x="9" y="10" width="6" height="5" fill="#000"/><rect x="10.5" y="11.5" width="3" height="2" fill="#fff"/></svg>
<div class="t" style="left:198px;top:424.55px;font-size:17px;color:#000;font-weight:normal;font-family:'Liberation Sans',sans-serif;transform:scaleX(0.885);transform-origin:0 0;">USFFournisseurs</div>
<div class="a" style="left:156px;top:457px;width:15px;height:1px;border-top:1px dotted #808080"></div>
<svg class="a" style="left:173px;top:448px;" width="18" height="18" viewBox="0 0 18 18"><rect x="0" y="0" width="18" height="18" fill="#000"/><rect x="0" y="0" width="18" height="3" fill="#000080"/>
<rect x="2" y="3" width="14" height="13" fill="#fff"/>
<g fill="#c8c8c8"><rect x="3" y="4" width="1" height="1"/><rect x="5" y="6" width="1" height="1"/><rect x="3" y="8" width="1" height="1"/><rect x="5" y="10" width="1" height="1"/><rect x="3" y="12" width="1" height="1"/><rect x="5" y="14" width="1" height="1"/><rect x="7" y="4" width="1" height="1"/><rect x="7" y="8" width="1" height="1"/><rect x="7" y="12" width="1" height="1"/></g>
<rect x="3" y="5" width="4" height="2" fill="#000"/><rect x="3" y="10" width="4" height="2" fill="#000"/>
<rect x="9" y="4" width="6" height="5" fill="#000"/><rect x="10.5" y="5.5" width="3" height="2" fill="#fff"/>
<rect x="9" y="10" width="6" height="5" fill="#000"/><rect x="10.5" y="11.5" width="3" height="2" fill="#fff"/></svg>
<div class="t" style="left:198px;top:448.55px;font-size:17px;color:#000;font-weight:normal;font-family:'Liberation Sans',sans-serif;transform:scaleX(0.885);transform-origin:0 0;">USFRéceptions</div>
<div class="a" style="left:156px;top:481px;width:15px;height:1px;border-top:1px dotted #808080"></div>
<svg class="a" style="left:173px;top:472px;" width="18" height="18" viewBox="0 0 18 18"><rect x="0" y="0" width="18" height="18" fill="#000"/><rect x="0" y="0" width="18" height="3" fill="#000080"/>
<rect x="2" y="3" width="14" height="13" fill="#fff"/>
<g fill="#c8c8c8"><rect x="3" y="4" width="1" height="1"/><rect x="5" y="6" width="1" height="1"/><rect x="3" y="8" width="1" height="1"/><rect x="5" y="10" width="1" height="1"/><rect x="3" y="12" width="1" height="1"/><rect x="5" y="14" width="1" height="1"/><rect x="7" y="4" width="1" height="1"/><rect x="7" y="8" width="1" height="1"/><rect x="7" y="12" width="1" height="1"/></g>
<rect x="3" y="5" width="4" height="2" fill="#000"/><rect x="3" y="10" width="4" height="2" fill="#000"/>
<rect x="9" y="4" width="6" height="5" fill="#000"/><rect x="10.5" y="5.5" width="3" height="2" fill="#fff"/>
<rect x="9" y="10" width="6" height="5" fill="#000"/><rect x="10.5" y="11.5" width="3" height="2" fill="#fff"/></svg>
<div class="t" style="left:198px;top:472.55px;font-size:17px;color:#000;font-weight:normal;font-family:'Liberation Sans',sans-serif;transform:scaleX(0.885);transform-origin:0 0;">USFSociété</div>
<div class="a" style="left:156px;top:505px;width:15px;height:1px;border-top:1px dotted #808080"></div>
<svg class="a" style="left:173px;top:496px;" width="18" height="18" viewBox="0 0 18 18"><rect x="0" y="0" width="18" height="18" fill="#000"/><rect x="0" y="0" width="18" height="3" fill="#000080"/>
<rect x="2" y="3" width="14" height="13" fill="#fff"/>
<g fill="#c8c8c8"><rect x="3" y="4" width="1" height="1"/><rect x="5" y="6" width="1" height="1"/><rect x="3" y="8" width="1" height="1"/><rect x="5" y="10" width="1" height="1"/><rect x="3" y="12" width="1" height="1"/><rect x="5" y="14" width="1" height="1"/><rect x="7" y="4" width="1" height="1"/><rect x="7" y="8" width="1" height="1"/><rect x="7" y="12" width="1" height="1"/></g>
<rect x="3" y="5" width="4" height="2" fill="#000"/><rect x="3" y="10" width="4" height="2" fill="#000"/>
<rect x="9" y="4" width="6" height="5" fill="#000"/><rect x="10.5" y="5.5" width="3" height="2" fill="#fff"/>
<rect x="9" y="10" width="6" height="5" fill="#000"/><rect x="10.5" y="11.5" width="3" height="2" fill="#fff"/></svg>
<div class="t" style="left:198px;top:496.55px;font-size:17px;color:#000;font-weight:normal;font-family:'Liberation Sans',sans-serif;transform:scaleX(0.885);transform-origin:0 0;">USFTypebon</div>
<div class="a" style="left:156px;top:529px;width:15px;height:1px;border-top:1px dotted #808080"></div>
<svg class="a" style="left:173px;top:520px;" width="18" height="18" viewBox="0 0 18 18"><rect x="0" y="0" width="18" height="18" fill="#000"/><rect x="0" y="0" width="18" height="3" fill="#000080"/>
<rect x="2" y="3" width="14" height="13" fill="#fff"/>
<g fill="#c8c8c8"><rect x="3" y="4" width="1" height="1"/><rect x="5" y="6" width="1" height="1"/><rect x="3" y="8" width="1" height="1"/><rect x="5" y="10" width="1" height="1"/><rect x="3" y="12" width="1" height="1"/><rect x="5" y="14" width="1" height="1"/><rect x="7" y="4" width="1" height="1"/><rect x="7" y="8" width="1" height="1"/><rect x="7" y="12" width="1" height="1"/></g>
<rect x="3" y="5" width="4" height="2" fill="#000"/><rect x="3" y="10" width="4" height="2" fill="#000"/>
<rect x="9" y="4" width="6" height="5" fill="#000"/><rect x="10.5" y="5.5" width="3" height="2" fill="#fff"/>
<rect x="9" y="10" width="6" height="5" fill="#000"/><rect x="10.5" y="11.5" width="3" height="2" fill="#fff"/></svg>
<div class="t" style="left:198px;top:520.55px;font-size:17px;color:#000;font-weight:normal;font-family:'Liberation Sans',sans-serif;transform:scaleX(0.885);transform-origin:0 0;">USFVendre</div>
<div class="a" style="left:156px;top:553px;width:15px;height:1px;border-top:1px dotted #808080"></div>
<svg class="a" style="left:173px;top:544px;" width="18" height="18" viewBox="0 0 18 18"><rect x="0" y="0" width="18" height="18" fill="#000"/><rect x="0" y="0" width="18" height="3" fill="#000080"/>
<rect x="2" y="3" width="14" height="13" fill="#fff"/>
<g fill="#c8c8c8"><rect x="3" y="4" width="1" height="1"/><rect x="5" y="6" width="1" height="1"/><rect x="3" y="8" width="1" height="1"/><rect x="5" y="10" width="1" height="1"/><rect x="3" y="12" width="1" height="1"/><rect x="5" y="14" width="1" height="1"/><rect x="7" y="4" width="1" height="1"/><rect x="7" y="8" width="1" height="1"/><rect x="7" y="12" width="1" height="1"/></g>
<rect x="3" y="5" width="4" height="2" fill="#000"/><rect x="3" y="10" width="4" height="2" fill="#000"/>
<rect x="9" y="4" width="6" height="5" fill="#000"/><rect x="10.5" y="5.5" width="3" height="2" fill="#fff"/>
<rect x="9" y="10" width="6" height="5" fill="#000"/><rect x="10.5" y="11.5" width="3" height="2" fill="#fff"/></svg>
<div class="t" style="left:198px;top:544.55px;font-size:17px;color:#000;font-weight:normal;font-family:'Liberation Sans',sans-serif;transform:scaleX(0.885);transform-origin:0 0;">USFVisualisation</div>
<div class="a" style="left:122px;top:571px;width:13px;height:13px;background:#fff;border:1px solid #808080"></div>
<div class="a" style="left:125px;top:577px;width:7px;height:1px;background:#000;"></div>
<div class="a" style="left:128px;top:574px;width:1px;height:7px;background:#000;"></div>
<div class="a" style="left:136px;top:577px;width:10px;height:1px;border-top:1px dotted #808080"></div>
<svg class="a" style="left:146px;top:567px;" width="22" height="18" viewBox="0 0 22 18"><defs><pattern id="ck" width="2" height="2" patternUnits="userSpaceOnUse"><rect width="2" height="2" fill="#ffff40"/><rect width="1" height="1" fill="#e0e0a0"/></pattern></defs><path d="M1.5,17.5 V3.5 H3 L4,1.5 H10 L11,3.5 H21.5 V17.5" fill="#fff" stroke="#808080" stroke-width="1.4"/><rect x="3" y="5" width="17" height="12" fill="url(#ck)"/><rect x="5" y="2.5" width="5" height="2" fill="#ffff40"/></svg>
<div class="t" style="left:171px;top:568.55px;font-size:17px;color:#000;font-weight:normal;font-family:'Liberation Sans',sans-serif;transform:scaleX(0.885);transform-origin:0 0;">Modules</div>
<div class="a" style="left:503px;top:276px;width:26px;height:309px;background:#f0f0f0;"></div>
<svg class="a" style="left:510px;top:287px;" width="11" height="10" viewBox="0 0 11 10"><path d="M0,9.5 L5.5,4 L11,9.5 V5.5 L5.5,0 L0,5.5 Z" fill="#606060"/></svg>
<div class="a" style="left:504px;top:448px;width:23px;height:102px;background:#cdcdcd;"></div>
<svg class="a" style="left:510px;top:567px;" width="11" height="10" viewBox="0 0 11 10"><path d="M0,0 L5.5,5.5 L11,0 V4 L5.5,9.5 L0,4 Z" fill="#606060"/></svg>
<div class="a" style="left:90px;top:585px;width:413px;height:24px;background:#f0f0f0;"></div>
<svg class="a" style="left:97px;top:592px;" width="10" height="11" viewBox="0 0 10 11"><path d="M9.5,0 L4,5.5 L9.5,11 H5.5 L0,5.5 L5.5,0 Z" fill="#606060"/></svg>
<div class="a" style="left:115px;top:586px;width:344px;height:22px;background:#cdcdcd;"></div>
<svg class="a" style="left:484px;top:592px;" width="10" height="11" viewBox="0 0 10 11"><path d="M0,0 L5.5,5.5 L0,11 H4 L9.5,5.5 L4,0 Z" fill="#606060"/></svg>
<div class="a" style="left:88px;top:618px;width:442px;height:33px;background:#bfcddb;"></div>
<div class="t" style="left:88px;top:623.70px;font-size:18px;color:#000;font-weight:normal;font-family:'Liberation Sans',sans-serif;transform:scaleX(0.965);transform-origin:0 0;">Propriétés - Feuil8</div>
<div class="a" style="left:497px;top:618px;width:32px;height:32px;background:#f0f0f0;border-top:1px solid #e3e3e3;border-left:1px solid #e3e3e3;border-right:1px solid #696969;border-bottom:1px solid #696969;box-shadow:inset 1px 1px 0 #fff, inset -1px -1px 0 #a0a0a0;"></div>
<svg class="a" style="left:503px;top:623px;" width="22" height="22" viewBox="0 0 22 22"><path d="M2.5,2.5 L19.5,19.5 M19.5,2.5 L2.5,19.5" stroke="#000" stroke-width="3"/></svg>
<div class="a" style="left:88px;top:656px;width:438px;height:23px;background:#fff;border-top:1px solid #a0a0a0;border-left:1px solid #a0a0a0;border-right:1px solid #fff;border-bottom:1px solid #fff;box-shadow:inset 1px 1px 0 #696969, inset -1px -1px 0 #e3e3e3;"></div>
<div class="t" style="left:91px;top:660.14px;font-size:16.3px;color:#000;font-weight:normal;font-family:'Liberation Sans',sans-serif;"><b>Feuil8</b> Worksheet</div>
<div class="a" style="left:500px;top:658px;width:25px;height:20px;background:#f0f0f0;border-top:1px solid #e3e3e3;border-left:1px solid #e3e3e3;border-right:1px solid #696969;border-bottom:1px solid #696969;box-shadow:inset 1px 1px 0 #fff, inset -1px -1px 0 #a0a0a0;"></div>
<svg class="a" style="left:505px;top:664px;" width="14" height="8" viewBox="0 0 14 8"><path d="M1,1 H13 L7,7 Z" fill="#000"/></svg>
<div class="a" style="left:88px;top:684px;width:108px;height:27px;background:#f0f0f0;border-top:1px solid #fff;border-left:1px solid #fff;border-right:2px solid #696969"></div>
<div class="t" style="left:95.5px;top:688.64px;font-size:16.3px;color:#000;font-weight:normal;font-family:'Liberation Sans',sans-serif;transform:scaleX(0.985);transform-origin:0 0;">Alphabétique</div>
<div class="a" style="left:196px;top:686px;width:102px;height:25px;background:#f0f0f0;border-top:1px solid #fff;border-right:2px solid #696969"></div>
<div class="t" style="left:199.5px;top:691.14px;font-size:16.3px;color:#000;font-weight:normal;font-family:'Liberation Sans',sans-serif;transform:scaleX(0.975);transform-origin:0 0;">Par catégorie</div>
<div class="a" style="left:91px;top:711px;width:436px;height:238px;background:#fff;border-top:1px solid #a0a0a0;border-left:1px solid #a0a0a0;border-right:1px solid #fff;border-bottom:1px solid #fff;box-shadow:inset 1px 1px 0 #696969, inset -1px -1px 0 #e3e3e3;border-bottom:1px solid #696969;border-right:1px solid #696969"></div>
<div class="a" style="left:88px;top:951px;width:442px;height:1px;background:#6d6d6d;"></div>
<div class="a" style="left:529px;top:711px;width:1px;height:241px;background:#6d6d6d;"></div>
<div class="a" style="left:93px;top:713px;width:405px;height:234px;background:#fff;"></div>
<div class="a" style="left:0;top:0;width:1920px;height:947px;overflow:hidden">
<div class="a" style="left:93px;top:714px;width:205px;height:21px;overflow:hidden">
<div class="t" style="left:2px;top:3.80px;font-size:16px;color:#000;transform:scaleX(0.945);transform-origin:0 0">(Name)</div></div>
<div class="t" style="left:300px;top:717.80px;font-size:16px;color:#000;font-weight:normal;font-family:'Liberation Sans',sans-serif;transform:scaleX(0.995);transform-origin:0 0;">Feuil8</div>
<div class="a" style="left:93px;top:735px;width:405px;height:1px;background:#c8c8c8;"></div>
<div class="a" style="left:93px;top:736px;width:205px;height:21px;overflow:hidden">
<div class="t" style="left:2px;top:3.80px;font-size:16px;color:#000;transform:scaleX(0.945);transform-origin:0 0">DisplayPageBreaks</div></div>
<div class="t" style="left:300px;top:739.80px;font-size:16px;color:#000;font-weight:normal;font-family:'Liberation Sans',sans-serif;transform:scaleX(0.995);transform-origin:0 0;">False</div>
<div class="a" style="left:93px;top:757px;width:405px;height:1px;background:#c8c8c8;"></div>
<div class="a" style="left:93px;top:758px;width:205px;height:21px;overflow:hidden">
<div class="t" style="left:2px;top:3.80px;font-size:16px;color:#000;transform:scaleX(0.945);transform-origin:0 0">DisplayRightToLeft</div></div>
<div class="t" style="left:300px;top:761.80px;font-size:16px;color:#000;font-weight:normal;font-family:'Liberation Sans',sans-serif;transform:scaleX(0.995);transform-origin:0 0;">False</div>
<div class="a" style="left:93px;top:779px;width:405px;height:1px;background:#c8c8c8;"></div>
<div class="a" style="left:93px;top:780px;width:205px;height:21px;overflow:hidden">
<div class="t" style="left:2px;top:3.80px;font-size:16px;color:#000;transform:scaleX(0.945);transform-origin:0 0">EnableAutoFilter</div></div>
<div class="t" style="left:300px;top:783.80px;font-size:16px;color:#000;font-weight:normal;font-family:'Liberation Sans',sans-serif;transform:scaleX(0.995);transform-origin:0 0;">False</div>
<div class="a" style="left:93px;top:801px;width:405px;height:1px;background:#c8c8c8;"></div>
<div class="a" style="left:93px;top:802px;width:205px;height:21px;overflow:hidden">
<div class="t" style="left:2px;top:3.80px;font-size:16px;color:#000;transform:scaleX(0.945);transform-origin:0 0">EnableCalculation</div></div>
<div class="t" style="left:300px;top:805.80px;font-size:16px;color:#000;font-weight:normal;font-family:'Liberation Sans',sans-serif;transform:scaleX(0.995);transform-origin:0 0;">True</div>
<div class="a" style="left:93px;top:823px;width:405px;height:1px;background:#c8c8c8;"></div>
<div class="a" style="left:93px;top:824px;width:205px;height:21px;overflow:hidden">
<div class="t" style="left:2px;top:3.80px;font-size:16px;color:#000;transform:scaleX(0.945);transform-origin:0 0">EnableFormatConditionsCalculation</div></div>
<div class="t" style="left:300px;top:827.80px;font-size:16px;color:#000;font-weight:normal;font-family:'Liberation Sans',sans-serif;transform:scaleX(0.995);transform-origin:0 0;">True</div>
<div class="a" style="left:93px;top:845px;width:405px;height:1px;background:#c8c8c8;"></div>
<div class="a" style="left:93px;top:846px;width:205px;height:21px;overflow:hidden">
<div class="t" style="left:2px;top:3.80px;font-size:16px;color:#000;transform:scaleX(0.945);transform-origin:0 0">EnableOutlining</div></div>
<div class="t" style="left:300px;top:849.80px;font-size:16px;color:#000;font-weight:normal;font-family:'Liberation Sans',sans-serif;transform:scaleX(0.995);transform-origin:0 0;">False</div>
<div class="a" style="left:93px;top:867px;width:405px;height:1px;background:#c8c8c8;"></div>
<div class="a" style="left:93px;top:868px;width:205px;height:21px;overflow:hidden">
<div class="t" style="left:2px;top:3.80px;font-size:16px;color:#000;transform:scaleX(0.945);transform-origin:0 0">EnablePivotTable</div></div>
<div class="t" style="left:300px;top:871.80px;font-size:16px;color:#000;font-weight:normal;font-family:'Liberation Sans',sans-serif;transform:scaleX(0.995);transform-origin:0 0;">False</div>
<div class="a" style="left:93px;top:889px;width:405px;height:1px;background:#c8c8c8;"></div>
<div class="a" style="left:93px;top:890px;width:205px;height:21px;overflow:hidden">
<div class="t" style="left:2px;top:3.80px;font-size:16px;color:#000;transform:scaleX(0.945);transform-origin:0 0">EnableSelection</div></div>
<div class="t" style="left:300px;top:893.80px;font-size:16px;color:#000;font-weight:normal;font-family:'Liberation Sans',sans-serif;transform:scaleX(0.995);transform-origin:0 0;">0 - xlNoRestrictions</div>
<div class="a" style="left:93px;top:911px;width:405px;height:1px;background:#c8c8c8;"></div>
<div class="a" style="left:93px;top:912px;width:205px;height:21px;background:#3399ff;"></div>
<div class="a" style="left:93px;top:912px;width:205px;height:21px;overflow:hidden">
<div class="t" style="left:2px;top:3.80px;font-size:16px;color:#fff;transform:scaleX(0.945);transform-origin:0 0">Name</div></div>
<div class="t" style="left:300px;top:915.80px;font-size:16px;color:#000;font-weight:normal;font-family:'Liberation Sans',sans-serif;transform:scaleX(0.995);transform-origin:0 0;">Menu</div>
<div class="a" style="left:93px;top:933px;width:405px;height:1px;background:#c8c8c8;"></div>
<div class="a" style="left:93px;top:934px;width:205px;height:21px;overflow:hidden">
<div class="t" style="left:2px;top:3.80px;font-size:16px;color:#000;transform:scaleX(0.945);transform-origin:0 0">ScrollArea</div></div>
</div>
<div class="a" style="left:298px;top:713px;width:1px;height:234px;background:#c8c8c8;"></div>
<div class="a" style="left:498px;top:713px;width:27px;height:234px;background:#f0f0f0;"></div>
<svg class="a" style="left:505px;top:724px;" width="11" height="10" viewBox="0 0 11 10"><path d="M0,9.5 L5.5,4 L11,9.5 V5.5 L5.5,0 L0,5.5 Z" fill="#606060"/></svg>
<div class="a" style="left:499px;top:740px;width:24px;height:138px;background:#cdcdcd;"></div>
<svg class="a" style="left:505px;top:929px;" width="11" height="10" viewBox="0 0 11 10"><path d="M0,0 L5.5,5.5 L11,0 V4 L5.5,9.5 L0,4 Z" fill="#606060"/></svg>
<div class="a" style="left:536px;top:201px;width:1293px;height:640px;background:#f0f0f0;border-top:1px solid #a0a0a0;border-left:1px solid #a0a0a0;border-right:1px solid #fff;border-bottom:1px solid #fff;box-shadow:inset 1px 1px 0 #696969, inset -1px -1px 0 #e3e3e3;"></div>
<div class="a" style="left:548px;top:206px;width:627px;height:24px;background:#fff;border-top:1px solid #a0a0a0;border-left:1px solid #a0a0a0;border-right:1px solid #fff;border-bottom:1px solid #fff;box-shadow:inset 1px 1px 0 #696969, inset -1px -1px 0 #e3e3e3;"></div>
<div class="t" style="left:552px;top:208.83px;font-size:16.2px;color:#000;font-weight:bold;font-family:'Liberation Sans',sans-serif;transform:scaleX(0.995);transform-origin:0 0;">Button_Mot_de_passe</div>
<div class="a" style="left:1149px;top:207px;width:25px;height:22px;background:#f0f0f0;border-top:1px solid #e3e3e3;border-left:1px solid #e3e3e3;border-right:1px solid #696969;border-bottom:1px solid #696969;box-shadow:inset 1px 1px 0 #fff, inset -1px -1px 0 #a0a0a0;"></div>
<svg class="a" style="left:1154px;top:213px;" width="14" height="8" viewBox="0 0 14 8"><path d="M1,1 H13 L7,7 Z" fill="#000"/></svg>
<div class="a" style="left:1186px;top:206px;width:628px;height:24px;background:#fff;border-top:1px solid #a0a0a0;border-left:1px solid #a0a0a0;border-right:1px solid #fff;border-bottom:1px solid #fff;box-shadow:inset 1px 1px 0 #696969, inset -1px -1px 0 #e3e3e3;"></div>
<div class="t" style="left:1190px;top:208.83px;font-size:16.2px;color:#000;font-weight:bold;font-family:'Liberation Sans',sans-serif;transform:scaleX(0.995);transform-origin:0 0;">Click</div>
<div class="a" style="left:1788px;top:207px;width:25px;height:22px;background:#f0f0f0;border-top:1px solid #e3e3e3;border-left:1px solid #e3e3e3;border-right:1px solid #696969;border-bottom:1px solid #696969;box-shadow:inset 1px 1px 0 #fff, inset -1px -1px 0 #a0a0a0;"></div>
<svg class="a" style="left:1793px;top:213px;" width="14" height="8" viewBox="0 0 14 8"><path d="M1,1 H13 L7,7 Z" fill="#000"/></svg>
<div class="a" style="left:538px;top:233px;width:1289px;height:606px;background:#fff;border-top:1px solid #a0a0a0;border-left:1px solid #a0a0a0;border-right:1px solid #fff;border-bottom:1px solid #fff;box-shadow:inset 1px 1px 0 #696969, inset -1px -1px 0 #e3e3e3;"></div>
<div class="a" style="left:540px;top:235px;width:31px;height:579px;background:#f0f0f0;"></div>
<div class="a" style="left:570px;top:235px;width:1px;height:579px;background:#000;"></div>
<div class="a" style="left:572px;top:235px;width:1227px;height:578px;background:#fff;"></div>
<div class="a" style="left:571px;top:368px;width:1228px;height:1px;background:#808080;"></div>
<div class="a" style="left:571px;top:522px;width:1228px;height:1px;background:#808080;"></div>
<div class="a" style="left:571px;top:676px;width:1228px;height:1px;background:#808080;"></div>
<div class="t" style="left:582px;top:239.00px;font-size:20px;color:#000;font-weight:normal;font-family:'Liberation Mono',monospace;"><span style="color:#00007f">Private Sub </span>Button_Fourn_Click()</div>
<div class="t" style="left:582px;top:283.00px;font-size:20px;color:#000;font-weight:normal;font-family:'Liberation Mono',monospace;">    Paramêtrages.Hide</div>
<div class="t" style="left:582px;top:305.00px;font-size:20px;color:#000;font-weight:normal;font-family:'Liberation Mono',monospace;">    USFFournisseurs.Show</div>
<div class="t" style="left:582px;top:349.00px;font-size:20px;color:#000;font-weight:normal;font-family:'Liberation Mono',monospace;"><span style="color:#00007f">End Sub</span></div>
<div class="t" style="left:582px;top:393.00px;font-size:20px;color:#000;font-weight:normal;font-family:'Liberation Mono',monospace;"><span style="color:#00007f">Private Sub </span>Button_Perso_Click()</div>
<div class="t" style="left:582px;top:437.00px;font-size:20px;color:#000;font-weight:normal;font-family:'Liberation Mono',monospace;">    Paramêtrages.Hide</div>
<div class="t" style="left:582px;top:459.00px;font-size:20px;color:#000;font-weight:normal;font-family:'Liberation Mono',monospace;">    Personnel.Show</div>
<div class="t" style="left:582px;top:503.00px;font-size:20px;color:#000;font-weight:normal;font-family:'Liberation Mono',monospace;"><span style="color:#00007f">End Sub</span></div>
<div class="t" style="left:582px;top:547.00px;font-size:20px;color:#000;font-weight:normal;font-family:'Liberation Mono',monospace;"><span style="color:#00007f">Private Sub </span>Button_Mot_de_passe_Click()</div>
<div class="t" style="left:582px;top:591.00px;font-size:20px;color:#000;font-weight:normal;font-family:'Liberation Mono',monospace;">    Paramêtrages.Hide</div>
<div class="t" style="left:582px;top:613.00px;font-size:20px;color:#000;font-weight:normal;font-family:'Liberation Mono',monospace;">    <span style="background:#ffff00;padding:3px 0 3px 0">USFNEWMDP.Show</span></div>
<div class="t" style="left:582px;top:657.00px;font-size:20px;color:#000;font-weight:normal;font-family:'Liberation Mono',monospace;"><span style="color:#00007f">End Sub</span></div>
<div class="t" style="left:582px;top:701.00px;font-size:20px;color:#000;font-weight:normal;font-family:'Liberation Mono',monospace;"><span style="color:#00007f">Private Sub </span>Button_Société_Click()</div>
<div class="t" style="left:582px;top:745.00px;font-size:20px;color:#000;font-weight:normal;font-family:'Liberation Mono',monospace;">    Paramêtrages.Hide</div>
<div class="t" style="left:582px;top:767.00px;font-size:20px;color:#000;font-weight:normal;font-family:'Liberation Mono',monospace;">    USFSociété.Show</div>
<svg class="a" style="left:549px;top:613px;" width="20" height="19" viewBox="0 0 20 19"><path d="M2,6 H10 V1.5 L18,9.5 L10,17.5 V13 H2 Z" fill="#ffff00" stroke="#000" stroke-width="2" stroke-linejoin="miter"/></svg>
<div class="a" style="left:1799px;top:235px;width:26px;height:579px;background:repeating-conic-gradient(#f4f4f4 0 25%,#ffffff 0 50%) 0 0/2px 2px;"></div>
<div class="a" style="left:1799px;top:235px;width:26px;height:7px;background:#f0f0f0;border-top:1px solid #e3e3e3;border-left:1px solid #e3e3e3;border-right:1px solid #696969;border-bottom:1px solid #696969;box-shadow:inset 1px 1px 0 #fff, inset -1px -1px 0 #a0a0a0;"></div>
<div class="a" style="left:1799px;top:241px;width:26px;height:27px;background:#f0f0f0;border-top:1px solid #e3e3e3;border-left:1px solid #e3e3e3;border-right:1px solid #696969;border-bottom:1px solid #696969;box-shadow:inset 1px 1px 0 #fff, inset -1px -1px 0 #a0a0a0;"></div>
<svg class="a" style="left:1803px;top:247px;" width="18" height="14" viewBox="0 0 18 14"><path d="M2,12 H16 L9,4 Z" fill="#000"/></svg>
<div class="a" style="left:1799px;top:268px;width:26px;height:322px;background:#f0f0f0;border-top:1px solid #e3e3e3;border-left:1px solid #e3e3e3;border-right:1px solid #696969;border-bottom:1px solid #696969;box-shadow:inset 1px 1px 0 #fff, inset -1px -1px 0 #a0a0a0;"></div>
<div class="a" style="left:1799px;top:788px;width:26px;height:26px;background:#f0f0f0;border-top:1px solid #e3e3e3;border-left:1px solid #e3e3e3;border-right:1px solid #696969;border-bottom:1px solid #696969;box-shadow:inset 1px 1px 0 #fff, inset -1px -1px 0 #a0a0a0;"></div>
<svg class="a" style="left:1803px;top:794px;" width="18" height="14" viewBox="0 0 18 14"><path d="M2,3 H16 L9,11 Z" fill="#000"/></svg>
<div class="a" style="left:540px;top:813px;width:1259px;height:26px;background:repeating-conic-gradient(#f4f4f4 0 25%,#ffffff 0 50%) 0 0/2px 2px;"></div>
<div class="a" style="left:539px;top:813px;width:27px;height:26px;background:#f0f0f0;border-top:1px solid #e3e3e3;border-left:1px solid #e3e3e3;border-right:1px solid #696969;border-bottom:1px solid #696969;box-shadow:inset 1px 1px 0 #fff, inset -1px -1px 0 #a0a0a0;"></div>
<div class="a" style="left:548px;top:821px;width:10px;height:1px;background:#000;"></div>
<div class="a" style="left:551px;top:823px;width:7px;height:1px;background:#000;"></div>
<div class="a" style="left:548px;top:825px;width:10px;height:1px;background:#000;"></div>
<div class="a" style="left:566px;top:813px;width:26px;height:26px;background:#f0f0f0;border-top:1px solid #a0a0a0;border-left:1px solid #a0a0a0;border-right:1px solid #fff;border-bottom:1px solid #fff;box-shadow:inset 1px 1px 0 #696969, inset -1px -1px 0 #e3e3e3;"></div>
<div class="a" style="left:574px;top:822px;width:10px;height:1px;background:#000;"></div>
<div class="a" style="left:577px;top:824px;width:7px;height:1px;background:#000;"></div>
<div class="a" style="left:574px;top:826px;width:10px;height:1px;background:#000;"></div>
<div class="a" style="left:577px;top:828px;width:7px;height:1px;background:#000;"></div>
<div class="a" style="left:574px;top:830px;width:10px;height:1px;background:#000;"></div>
<div class="a" style="left:592px;top:813px;width:26px;height:26px;background:#f0f0f0;border-top:1px solid #e3e3e3;border-left:1px solid #e3e3e3;border-right:1px solid #696969;border-bottom:1px solid #696969;box-shadow:inset 1px 1px 0 #fff, inset -1px -1px 0 #a0a0a0;"></div>
<svg class="a" style="left:597px;top:817px;" width="14" height="18" viewBox="0 0 14 18"><path d="M11,2 V15 L3,8.5 Z" fill="#000"/></svg>
<div class="a" style="left:617px;top:813px;width:115px;height:26px;background:#f0f0f0;border-top:1px solid #e3e3e3;border-left:1px solid #e3e3e3;border-right:1px solid #696969;border-bottom:1px solid #696969;box-shadow:inset 1px 1px 0 #fff, inset -1px -1px 0 #a0a0a0;"></div>
<div class="a" style="left:1774px;top:813px;width:26px;height:26px;background:#f0f0f0;border-top:1px solid #e3e3e3;border-left:1px solid #e3e3e3;border-right:1px solid #696969;border-bottom:1px solid #696969;box-shadow:inset 1px 1px 0 #fff, inset -1px -1px 0 #a0a0a0;"></div>
<svg class="a" style="left:1780px;top:817px;" width="14" height="18" viewBox="0 0 14 18"><path d="M3,2 V15 L11,8.5 Z" fill="#000"/></svg>
<div class="a" style="left:1800px;top:814px;width:25px;height:25px;background:#f0f0f0;"></div>
<div class="a" style="left:536px;top:849px;width:1293px;height:33px;background:#bfcddb;"></div>
<div class="t" style="left:537px;top:855.20px;font-size:18px;color:#000;font-weight:normal;font-family:'Liberation Sans',sans-serif;transform:scaleX(0.965);transform-origin:0 0;">Espions</div>
<div class="a" style="left:1797px;top:850px;width:31px;height:32px;background:#f0f0f0;border-top:1px solid #e3e3e3;border-left:1px solid #e3e3e3;border-right:1px solid #696969;border-bottom:1px solid #696969;box-shadow:inset 1px 1px 0 #fff, inset -1px -1px 0 #a0a0a0;"></div>
<svg class="a" style="left:1802px;top:855px;" width="22" height="22" viewBox="0 0 22 22"><path d="M2.5,2.5 L19.5,19.5 M19.5,2.5 L2.5,19.5" stroke="#000" stroke-width="3"/></svg>
<div class="a" style="left:536px;top:883px;width:1292px;height:70px;background:#fff;border-top:1px solid #a0a0a0;border-left:1px solid #a0a0a0;border-right:1px solid #fff;border-bottom:1px solid #fff;box-shadow:inset 1px 1px 0 #696969, inset -1px -1px 0 #e3e3e3;"></div>
<div class="a" style="left:538px;top:885px;width:1262px;height:21px;background:#f0f0f0;border-bottom:1px solid #696969"></div>
<div class="a" style="left:853px;top:885px;width:2px;height:21px;background:#a0a0a0;border-right:1px solid #fff"></div>
<div class="a" style="left:1169px;top:885px;width:2px;height:21px;background:#a0a0a0;border-right:1px solid #fff"></div>
<div class="a" style="left:1485px;top:885px;width:2px;height:21px;background:#a0a0a0;border-right:1px solid #fff"></div>
<div class="t" style="left:542px;top:887.46px;font-size:17.7px;color:#000;font-weight:normal;font-family:'Liberation Sans',sans-serif;transform:scaleX(0.925);transform-origin:0 0;">Expression</div>
<div class="t" style="left:858px;top:887.46px;font-size:17.7px;color:#000;font-weight:normal;font-family:'Liberation Sans',sans-serif;transform:scaleX(0.925);transform-origin:0 0;">Valeur</div>
<div class="t" style="left:1174px;top:887.46px;font-size:17.7px;color:#000;font-weight:normal;font-family:'Liberation Sans',sans-serif;transform:scaleX(0.925);transform-origin:0 0;">Type</div>
<div class="t" style="left:1490px;top:887.46px;font-size:17.7px;color:#000;font-weight:normal;font-family:'Liberation Sans',sans-serif;transform:scaleX(0.925);transform-origin:0 0;">Contexte</div>
<div class="a" style="left:1801px;top:885px;width:26px;height:67px;background:#f0f0f0;"></div>
<div class="a" style="left:1801px;top:885px;width:26px;height:22px;background:#f0f0f0;border-top:1px solid #e3e3e3;border-left:1px solid #e3e3e3;border-right:1px solid #696969;border-bottom:1px solid #696969;box-shadow:inset 1px 1px 0 #fff, inset -1px -1px 0 #a0a0a0;"></div>
<svg class="a" style="left:1805px;top:889px;" width="18" height="14" viewBox="0 0 18 14"><path d="M2,11 H16 L9,4 Z" fill="#000"/></svg>
<div class="a" style="left:1801px;top:905px;width:26px;height:20px;background:#f0f0f0;border-top:1px solid #e3e3e3;border-left:1px solid #e3e3e3;border-right:1px solid #696969;border-bottom:1px solid #696969;box-shadow:inset 1px 1px 0 #fff, inset -1px -1px 0 #a0a0a0;"></div>
<div class="a" style="left:1801px;top:925px;width:26px;height:26px;background:#f0f0f0;border-top:1px solid #e3e3e3;border-left:1px solid #e3e3e3;border-right:1px solid #696969;border-bottom:1px solid #696969;box-shadow:inset 1px 1px 0 #fff, inset -1px -1px 0 #a0a0a0;"></div>
<svg class="a" style="left:1805px;top:931px;" width="18" height="14" viewBox="0 0 18 14"><path d="M2,3 H16 L9,10 Z" fill="#000"/></svg>
</body></html>
